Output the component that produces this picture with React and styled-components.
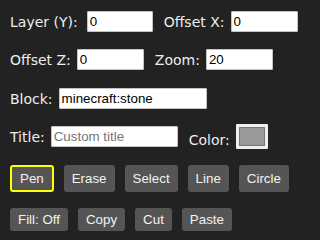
import React from "react";
import styled, { createGlobalStyle } from "styled-components";

const GlobalStyle = createGlobalStyle`
  html, body {
    margin: 0;
    background: #222;
  }
  body {
    font-family: "DejaVu Sans", Verdana, sans-serif;
  }
`;

const Panel = styled.div`
  padding: 11px 10px 0;
  color: #eee;
  font-size: 14px;
`;

const Row = styled.div`
  display: flex;
  align-items: center;
  gap: 11px;
  margin-bottom: ${({ $mb }) => ($mb === undefined ? 17 : $mb)}px;
`;

const Field = styled.label`
  display: flex;
  align-items: ${({ $end }) => ($end ? "flex-end" : "center")};
  gap: ${({ $gap }) => $gap || 6}px;
  span {
    padding-bottom: ${({ $end }) => ($end ? 1 : 0)}px;
  }
`;

const TextInput = styled.input`
  box-sizing: border-box;
  width: ${({ $w }) => $w || 67}px;
  height: 21px;
  padding: 1px 2px;
  border: 1px solid #c4c4c4;
  border-radius: 1px;
  background: #fff;
  color: #000;
  font: 13.333px "Liberation Sans", Arial, sans-serif;
  outline: none;
  &::placeholder {
    color: #767676;
  }
`;

const ColorInput = styled.input`
  box-sizing: border-box;
  width: 32px;
  height: 25px;
  padding: 3px;
  border: none;
  border-radius: 1px;
  background: #efefef;
  &::-webkit-color-swatch-wrapper {
    padding: 0;
  }
  &::-webkit-color-swatch {
    border: 1px solid #777;
    border-radius: 0;
  }
`;

const Toolbar = styled.div`
  display: flex;
  gap: 10px;
  margin-bottom: 16px;
`;

const ToolButton = styled.button`
  padding: 4px 8px;
  border: ${({ $active }) => ($active ? "2px solid #ff0" : "none")};
  border-radius: 3px;
  background: #555;
  color: #f2f2f2;
  font: 13.333px "Liberation Sans", Arial, sans-serif;
  line-height: 15px;
  cursor: pointer;
`;

const tools = ["Pen", "Erase", "Select", "Line", "Circle"];
const actions = ["Fill: Off", "Copy", "Cut", "Paste"];

export default function App() {
  return (
    <>
      <GlobalStyle />
      <Panel>
        <Row>
          <Field $gap={9}>
            <span>Layer (Y):</span>
            <TextInput defaultValue="0" $w={66} />
          </Field>
          <Field>
            <span>Offset X:</span>
            <TextInput defaultValue="0" />
          </Field>
        </Row>
        <Row $mb={18}>
          <Field>
            <span>Offset Z:</span>
            <TextInput defaultValue="0" />
          </Field>
          <Field>
            <span>Zoom:</span>
            <TextInput defaultValue="20" />
          </Field>
        </Row>
        <Row $mb={15}>
          <Field>
            <span>Block:</span>
            <TextInput defaultValue="minecraft:stone" $w={148} />
          </Field>
        </Row>
        <Row $mb={16}>
          <Field>
            <span>Title:</span>
            <TextInput placeholder="Custom title" $w={127} />
          </Field>
          <Field $end>
            <span>Color:</span>
            <ColorInput type="color" defaultValue="#999999" />
          </Field>
        </Row>
        <Toolbar>
          {tools.map((t) => (
            <ToolButton key={t} $active={t === "Pen"}>
              {t}
            </ToolButton>
          ))}
        </Toolbar>
        <Toolbar>
          {actions.map((a) => (
            <ToolButton key={a}>{a}</ToolButton>
          ))}
        </Toolbar>
      </Panel>
    </>
  );
}
